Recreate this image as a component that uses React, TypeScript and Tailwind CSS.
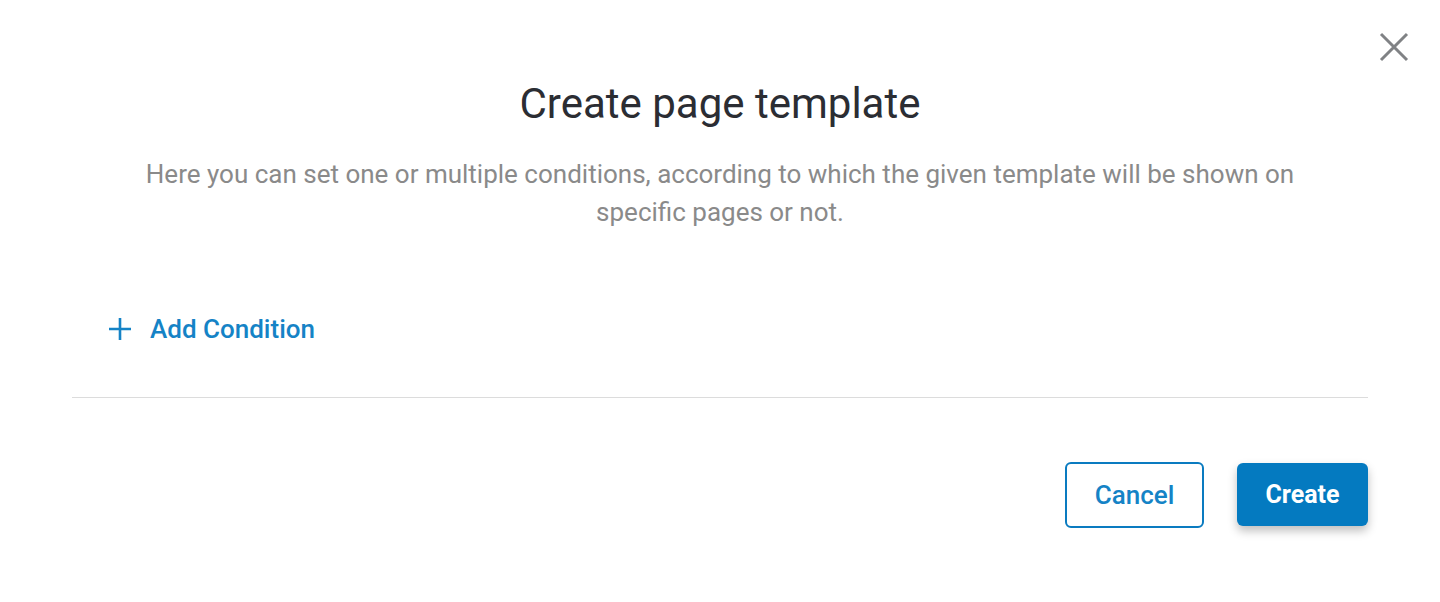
import React from "react"

export default function App() {
    return (
        <div className="w-[1440px] h-[602px] bg-white relative font-['Roboto',sans-serif]">
            {/* close */}
            <button className="absolute right-[30px] top-[31px] w-[32px] h-[32px] flex items-center justify-center text-[#808285]">
                <svg width="30" height="30" viewBox="0 0 30 30" fill="none" stroke="currentColor" strokeWidth="3">
                    <path d="M2 2L28 28M28 2L2 28" />
                </svg>
            </button>

            <div className="flex flex-col px-[72px] pt-[80px]">
                <h1 className="text-center text-[42px] leading-[48px] text-[#2b2d33] font-normal">Create page template</h1>
                <p className="mt-[27px] text-center text-[26px] leading-[38px] text-[#8a8a8a]">
                    Here you can set one or multiple conditions, according to which the given template will be shown on
                    <br />
                    specific pages or not.
                </p>

                <div className="mt-[68px] h-[60px] flex items-center pl-[36px]">
                    <button className="flex items-center gap-[18px] text-[#1583c6]">
                        <svg width="24" height="24" viewBox="0 0 24 24" fill="none" stroke="currentColor" strokeWidth="2.6">
                            <path d="M12 1V23M1 12H23" />
                        </svg>
                        <span className="text-[26px] font-medium">Add Condition</span>
                    </button>
                </div>

                <div className="mt-[38px] border-t border-[#dcdcdc]" />

                <div className="mt-[64px] flex justify-end gap-[33px]">
                    <button className="w-[139px] h-[66px] rounded-[6px] border-2 border-[#0a7bc0] text-[#1583c6] text-[26px] font-medium">
                        Cancel
                    </button>
                    <button className="w-[131px] h-[63px] mt-[1px] rounded-[6px] bg-[#047ac0] text-white text-[25px] font-bold shadow-[0_5px_10px_rgba(0,0,0,0.25)]">
                        Create
                    </button>
                </div>
            </div>
        </div>
    )
}
